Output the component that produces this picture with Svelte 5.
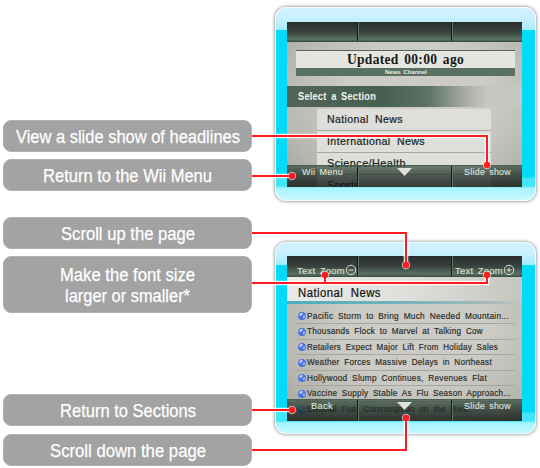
<script>
  const labels = [
    { lines: [['View a slide show of headlines', 224]], height: 32, gap: 120 },
    { lines: [['Return to the Wii Menu', 169]], height: 32, gap: 7 },
    { lines: [['Scroll up the page', 134]], height: 32, gap: 26 },
    { lines: [['Make the font size', 135], ['larger or smaller*', 125]], height: 57, gap: 7 },
    { lines: [['Return to Sections', 136]], height: 32, gap: 81 },
    { lines: [['Scroll down the page', 156]], height: 32, gap: 8 }
  ];
  const sections = [['National News', 76], ['International News', 98], ['Science/Health', 79], ['Sports', 33]];
  const stories = [
    ['Pacific Storm to Bring Much Needed Mountain...', 202],
    ['Thousands Flock to Marvel at Talking Cow', 176],
    ['Retailers Expect Major Lift From Holiday Sales', 191],
    ['Weather Forces Massive Delays in Northeast', 185],
    ['Hollywood Slump Continues, Revenues Flat', 180],
    ['Vaccine Supply Stable As Flu Season Approach...', 204],
    ['Ethanol Fuel Consumption on the Rise', 161]
  ];
  const leaders = [
    'M252 136H487V165',
    'M252 176H292',
    'M252 233H406V265',
    'M252 283H487V275M325 283V275',
    'M252 410H292',
    'M252 450H406V418'
  ];
  const dots = [[487, 165], [292, 176], [406, 265], [325, 275], [487, 275], [292, 410], [406, 418]];
</script>

{#snippet fit(text, width, height, base, kind)}
  <svg class="fit {kind}" {width} {height}>
    <text x="0" y={base} textLength={width} lengthAdjust="spacingAndGlyphs">{text}</text>
  </svg>
{/snippet}

{#snippet zoomIcon(plus)}
  <svg class="zoom" width="12" height="12" viewBox="0 0 12 12">
    <circle cx="6" cy="6" r="4.7" />
    <path d={plus ? 'M3.5 6h5M6 3.5v5' : 'M3.5 6h5'} />
  </svg>
{/snippet}

{#snippet footer(left, width)}
  <div class="bar bottom">
    <span class="side">{@render fit(left, width, 10, 9, 'small')}</span>
    <span class="middle"><svg width="15" height="8"><path d="M0 0h15l-7.500 8z" fill="#e0e2df" /></svg></span>
    <span class="side">{@render fit('Slide show', 47, 10, 9, 'small')}</span>
  </div>
{/snippet}

<main>
  <div class="labels">
    {#each labels as l}
      <div class="label" style="height:{l.height}px;margin-top:{l.gap}px">
        {#each l.lines as [text, width]}
          {@render fit(text, width, 21, 16.5, 'caption')}
        {/each}
      </div>
    {/each}
  </div>

  <div class="consoles">
    <section class="console first">
      <div class="screen">
        <div class="bar top"><span class="side"></span><span class="middle"></span><span class="side"></span></div>
        <div class="masthead">
          <div class="updated">{@render fit('Updated 00:00 ago', 117, 17, 13.2, 'serif')}</div>
          <div class="channel">{@render fit('News Channel', 42, 8, 6.2, 'tiny')}</div>
        </div>
        <div class="select">{@render fit('Select a Section', 78, 21, 14.3, 'heading')}</div>
        <div class="sections">
          {#each sections as [text, width]}
            <div class="section">{@render fit(text, width, 21, 14.2, 'item')}</div>
          {/each}
        </div>
        {@render footer('Wii Menu', 41)}
      </div>
    </section>

    <section class="console second">
      <div class="screen">
        <div class="bar top">
          <span class="side">{@render fit('Text Zoom', 48, 12, 10, 'small')}{@render zoomIcon(false)}</span>
          <span class="middle"></span>
          <span class="side">{@render fit('Text Zoom', 48, 12, 10, 'small')}{@render zoomIcon(true)}</span>
        </div>
        <div class="title">{@render fit('National News', 83, 23, 20, 'big')}</div>
        <div class="stripe"></div>
        <div class="stories">
          {#each stories as [text, width]}
            <div class="story">
              <svg class="globe" width="8" height="8" viewBox="0 0 8 8">
                <circle cx="4" cy="4" r="3.9" fill="#4672e6" />
                <path d="M1 2.500L3 .8l2 .7-1 2-2 .5zM5 4l2-.5-.3 2L5.300 6.500z" fill="#b9cbed" />
              </svg>
              {@render fit(text, width, 14, 10.2, 'headline')}
            </div>
          {/each}
        </div>
        {@render footer('Back', 22)}
      </div>
    </section>
  </div>

  <svg class="leaders" width="540" height="468">
    <clipPath id="over"><rect x="270" y="0" width="270" height="468" /></clipPath>
    <g clip-path="url(#over)">
      {#each leaders as d}<path class="halo" {d} />{/each}
      {#each dots as [x, y]}<circle cx={x} cy={y} r="4.200" fill="#fff" opacity=".6" />{/each}
    </g>
    {#each leaders as d}<path class="line" {d} />{/each}
    {#each dots as [x, y]}<circle cx={x} cy={y} r="3.200" fill="#ff1c20" />{/each}
  </svg>
</main>

<style>
  :global(body) { margin: 0; background: #fff; }
  main {
    position: relative; display: flex; width: 540px; height: 468px; overflow: hidden;
    background: #fff; font-family: "Liberation Sans", Arial, sans-serif;
  }
  svg { display: block; flex: none; }
  .fit { overflow: visible; }
  .caption { font-size: 18px; fill: #fff; stroke: #fff; stroke-width: .25px; }
  .serif { font: bold 14px "Liberation Serif", serif; fill: #161a17; word-spacing: 2px; letter-spacing: .3px; }
  .tiny { font-size: 6px; font-weight: bold; fill: #e8ece8; word-spacing: 1px; }
  .heading { font-size: 10px; font-weight: bold; fill: #f1f4f0; word-spacing: 2px; letter-spacing: .2px; }
  .item { font-size: 10.500px; fill: #191b19; stroke: #191b19; stroke-width: .2px; word-spacing: 3px; letter-spacing: .4px; }
  .big { font-size: 12px; fill: #111; stroke: #111; stroke-width: .2px; word-spacing: 4px; letter-spacing: .5px; }
  .headline { font-size: 9px; fill: #242623; stroke: #242623; stroke-width: .15px; word-spacing: 2.300px; letter-spacing: .3px; }
  .small { font-size: 9.700px; fill: #dde0dc; stroke: #dde0dc; stroke-width: .15px; word-spacing: 1.500px; letter-spacing: .3px; }

  .labels { width: 249px; margin-left: 3px; display: flex; flex-direction: column; }
  .label {
    flex: none; box-sizing: border-box; border: 1px solid #b2b2b2; border-radius: 8px;
    background: #a3a3a3; display: flex; flex-direction: column; align-items: center; justify-content: center;
  }
  .consoles { margin-left: 23px; width: 261px; display: flex; flex-direction: column; }
  .console {
    flex: none; box-sizing: border-box; width: 261px; height: 194px; padding: 14px 13px 0 11px;
    border: 1px solid #eefcff; border-radius: 11px; box-shadow: 0 0 3px 1px #aaa;
    background: linear-gradient(#d2f1ff 0, #c9f0ff 10px, #a5ebff 22px, #00dcf7 22.500px, #00dcf7 169px, #42e6fa 170px, #42e6fa 178px, #a5f4ff 180px, #d2f9ff 194px);
  }
  .first { margin-top: 7px; }
  .second { margin-top: 41px; height: 192px; padding-top: 13px; }
  .screen {
    position: relative; width: 235px; height: 165px; overflow: hidden; display: flex; flex-direction: column;
    background: radial-gradient(ellipse at 55% 45%, #cccbc5 40%, #b7b7b0 75%, #969891 110%);
  }
  .bar { flex: none; display: flex; box-sizing: border-box; width: 235px; }
  .side { width: 70px; box-sizing: border-box; display: flex; }
  .middle {
    width: 95px; box-sizing: border-box; display: flex; justify-content: center;
    border: solid #151c18; border-width: 0 1px; box-shadow: inset 1px 0 #617468, 1px 0 #617468;
  }
  .top { height: 20px; background: linear-gradient(#292e2c, #38413d 50%, #5b7365 92%, #496052 93%); border-bottom: 1px solid #3c5143; }
  .second .top { height: 21px; }
  .top .side { padding: 8px 0 0 10px; }
  .top .side:last-child { padding-left: 3px; }
  .zoom { fill: none; stroke: #dde0dc; stroke-width: 1px; }
  .bottom {
    position: absolute; left: 0; bottom: 0; height: 22px; border-top: 1px solid #48604f;
    background: linear-gradient(rgba(45, 72, 55, .66), rgba(30, 44, 37, .76) 45%, rgba(14, 19, 17, .8));
  }
  .bottom .side { justify-content: center; }
  .bottom .side:last-child { justify-content: flex-start; padding-left: 12px; }
  .bottom .middle { padding-top: 2px; }

  .masthead { margin: 8px 7px 10px 9px; height: 26px; display: flex; flex-direction: column; }
  .updated { height: 18px; box-sizing: border-box; border-top: 1px solid #52685a; background: #e5e5e1; display: flex; justify-content: center; }
  .channel { height: 8px; background: #5a7062; display: flex; justify-content: center; }
  .select { flex: none; height: 21px; padding-left: 11px; background: linear-gradient(90deg, #526458, #456050 40%, #5d7264 60%, #a9ada6 76%, #c7c6c0 85%); }
  .sections { width: 174px; margin: 2px 0 0 30px; display: flex; flex-direction: column; }
  .section { flex: none; height: 22px; box-sizing: border-box; padding-left: 10px; background: #dededa; border-bottom: 1px solid #a6a8a2; }
  .title { flex: none; height: 24px; padding-left: 11px; background: linear-gradient(90deg, #e9e9e7, #dfdfdc 50%, #c8c8c3 95%); }
  .stripe { flex: none; height: 3px; background: linear-gradient(90deg, #4caebe, #75b3bb 50%, #a6b9ba 85%, #c3c4be); }
  .stories { margin: 4.500px 7px 0 9px; display: flex; flex-direction: column; }
  .story { flex: none; height: 15.600px; box-sizing: border-box; border-bottom: 1px solid #a5a69f; padding-left: 2px; display: flex; gap: 1px; }
  .globe { margin-top: 3.500px; }
  .leaders { position: absolute; left: 0; top: 0; }
  .halo { fill: none; stroke: #fff; stroke-width: 4.600px; stroke-linejoin: miter; opacity: .85; }
  .line { fill: none; stroke: #ff1c20; stroke-width: 2px; }
</style>
